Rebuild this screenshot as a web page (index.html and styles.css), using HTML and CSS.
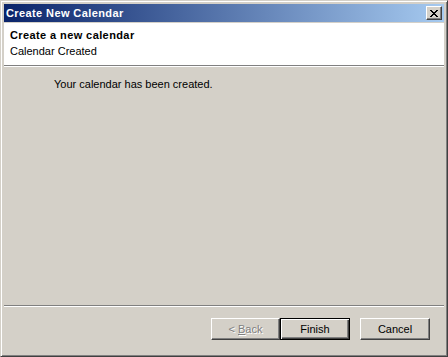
FILE: index.html
```html
<!DOCTYPE html>
<html>
<head>
<meta name="viewport" content="width=device-width, initial-scale=1.0">
<title>Create New Calendar</title>
<link rel="stylesheet" href="styles.css">
</head>
<body>

<div class="window">
  <div class="titlebar">
    <span class="title">Create New Calendar</span>
    <button class="close" type="button" title="Close">
      <svg width="8" height="7" viewBox="0 0 8 7">
        <path d="M0 0h2v1h-2zM6 0h2v1h-2zM1 1h2v1h-2zM5 1h2v1h-2zM2 2h4v1h-4zM3 3h2v1h-2zM2 4h4v1h-4zM1 5h2v1h-2zM5 5h2v1h-2zM0 6h2v1h-2zM6 6h2v1h-2z" fill="#000"/>
      </svg>
    </button>
  </div>

  <div class="header">
    <div class="header-title">Create a new calendar</div>
    <div class="header-sub">Calendar Created</div>
  </div>

  <div class="content">
    <p class="message">Your calendar has been created.</p>
  </div>

  <div class="separator"></div>

  <div class="buttons">
    <button class="btn back" type="button" disabled>&lt; <u>B</u>ack</button>
    <button class="btn default" type="button">Finish</button>
    <button class="btn cancel" type="button">Cancel</button>
  </div>
</div>

</body>
</html>
```

FILE: styles.css
```css
* {
  box-sizing: border-box;
}

body {
  margin: 0;
  font-family: "Liberation Sans", Arial, sans-serif;
  font-size: 11px;
  color: #000;
}

.window {
  width: 448px;
  height: 357px;
  display: flex;
  flex-direction: column;
  background-color: #d4d0c8;
  border: 1px solid;
  border-color: #d4d0c8 #404040 #404040 #d4d0c8;
  box-shadow: inset 1px 1px #fff, inset -1px -1px #808080;
  padding: 3px;
}

.titlebar {
  height: 18px;
  display: flex;
  align-items: center;
  justify-content: space-between;
  padding: 0 2px 0 2px;
  background: linear-gradient(to right, #0a246a, #a6caf0);
}

.title {
  color: #fff;
  font-weight: bold;
  letter-spacing: 0.4px;
  line-height: 18px;
}

.close {
  width: 16px;
  height: 14px;
  padding: 0;
  display: flex;
  align-items: center;
  justify-content: center;
  background-color: #d4d0c8;
  border: 1px solid;
  border-color: #fff #404040 #404040 #fff;
  box-shadow: inset -1px -1px #808080;
}

.close svg {
  display: block;
  margin: 1px 0 0 0;
}

.header {
  margin-top: 1px;
  height: 43px;
  padding: 4px 6px 0 6px;
  background-color: #fff;
  border-bottom: 1px solid #808080;
  box-shadow: 0 1px #fff;
  line-height: 16px;
}

.header-title {
  font-weight: bold;
  letter-spacing: 0.4px;
}

.content {
  flex: 1;
  padding: 10px 0 0 50px;
}

.message {
  margin: 0;
  line-height: 16px;
}

.separator {
  height: 2px;
  border-top: 1px solid #808080;
  border-bottom: 1px solid #fff;
}

.buttons {
  height: 46px;
  display: flex;
  justify-content: flex-end;
  align-items: flex-start;
  padding: 11px 14px 0 0;
}

.btn {
  width: 70px;
  height: 22px;
  padding: 0;
  font-family: "Liberation Sans", Arial, sans-serif;
  font-size: 11px;
  color: #000;
  background-color: #d4d0c8;
  border: 1px solid;
  border-color: #fff #404040 #404040 #fff;
  box-shadow: inset -1px -1px #808080;
}

.btn.back {
  width: 69px;
}

.btn:disabled {
  color: #808080;
  text-shadow: 1px 1px #fff;
}

.btn.default {
  border-color: #000;
  box-shadow: inset 1px 1px #fff, inset -1px -1px #404040, inset -2px -2px #808080;
}

.btn.cancel {
  margin-left: 10px;
}
```
